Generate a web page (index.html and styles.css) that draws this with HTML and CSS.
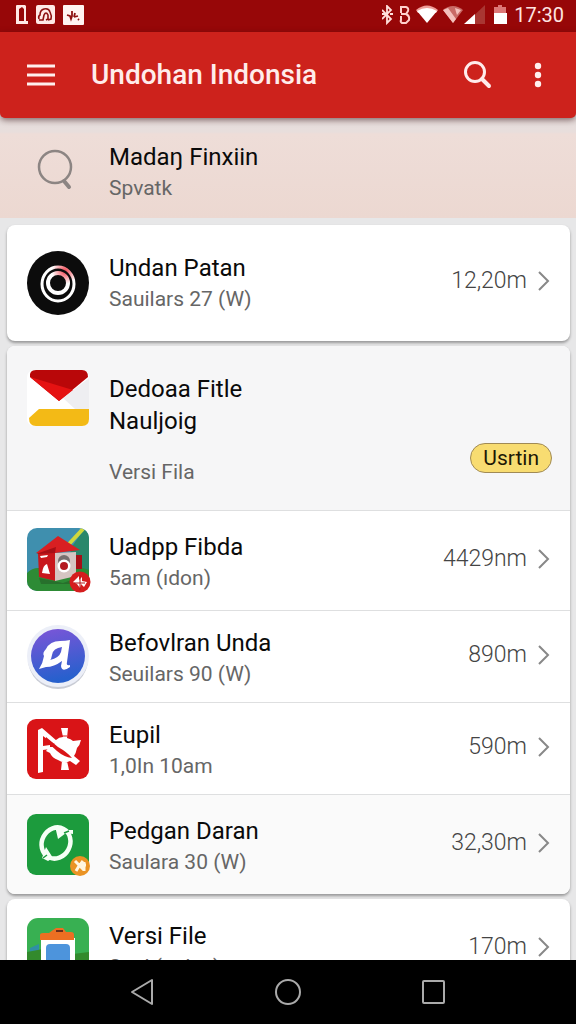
FILE: index.html
```html
<!DOCTYPE html>
<html lang="id">
<head>
<meta charset="utf-8">
<meta name="viewport" content="width=device-width, initial-scale=1">
<title>Undohan Indonsia</title>
<link rel="stylesheet" href="styles.css">
</head>
<body>
<div class="status">
  <div class="status-group">
    <svg width="70" height="20" viewBox="0 0 70 20" aria-hidden="true">
      <path fill="#ffe9e6" fill-rule="evenodd" d="M1 1q0-1 1-1h8l1 1v15h2v3H1zM4 4l3-2 2 2v12H4z"/>
      <rect x="21" width="19" height="19" rx="2" fill="#ffe9e6"/>
      <path fill="none" stroke="#8d1010" stroke-width="1.600" d="M24 14q-1-3 1-4 0-5 4-6 5-1 6 3 2 4 1 7l-3 1M24 15l4 0 1-5q2-4 4 0l0 4-2 1"/>
      <rect x="48" width="21" height="20" rx="1" fill="#fff3f1"/>
      <path fill="none" stroke="#8d1010" stroke-width="1.800" d="M52 10l3 1 1 3 1-3 0-5M59 12l1-4M59 12l4-1M63 14l1 1"/>
    </svg>
  </div>
  <div class="status-group">
    <svg width="126" height="20" viewBox="0 0 126 20" aria-hidden="true">
      <path fill="none" stroke="#ffe0dc" stroke-width="1.800" d="M0 5l9 9-4 4V1l4 4-9 9M0 9h3M8 9h3"/>
      <path fill="none" stroke="#ffd0cc" stroke-width="2" d="M19 8V2h5q3 1 2 4l-2 3h-5l5 0q4 2 3 6l-3 3h-4q-2-1-1-3v-4"/>
      <path fill="#ef9c98" d="M34 5q11-9 22 0l-2 3H36z"/>
      <path fill="#fff" d="M35 6q10-6 20 0L45 18z"/>
      <path fill="#c96a66" d="M61 5q10-8 20 0L71 18z"/>
      <path fill="#f4c0bc" d="M61 5l5-2 8 11-3 4zM73 3l6 2-4 5-1-3z"/>
      <path fill="#a93632" d="M103 0v19H83z"/>
      <path fill="#fff" d="M93 9v10H82z"/>
      <path fill="#d77" d="M112 2h4V0h4v2h4v8h-12z"/>
      <path fill="#fff" d="M112 8h13v11h-13z"/>
    </svg>
    <span class="clock">17:30</span>
  </div>
</div>

<header class="appbar">
  <button class="icon-button" type="button" aria-label="Menu">
    <svg width="28" height="22" viewBox="0 0 28 22"><path stroke="#fff0ee" stroke-width="3" d="M0 2h28M0 11h28M0 20h28"/></svg>
  </button>
  <h1 class="appbar-title">Undohan Indonsia</h1>
  <div class="actions">
    <button class="icon-button" type="button" aria-label="Cari">
      <svg width="28" height="28" viewBox="0 0 28 28" fill="none" stroke="#ffeceb" stroke-width="3"><circle cx="11" cy="11" r="9.500"/><path stroke-width="4" stroke-linecap="round" d="M18 18l7 7"/></svg>
    </button>
    <button class="icon-button" type="button" aria-label="Opsi lain">
      <svg width="8" height="26" viewBox="0 0 8 26" fill="#fff0ee"><circle cx="4" cy="4" r="3.200"/><circle cx="4" cy="13" r="3.200"/><circle cx="4" cy="22" r="3.200"/></svg>
    </button>
  </div>
</header>

<main class="list">
  <a class="row search-row" href="#">
    <span class="icon">
      <svg width="60" height="42" viewBox="0 0 60 42" fill="none" stroke="#8c8583" stroke-width="2.500"><circle cx="28" cy="18" r="16"/><path stroke-width="4" stroke-linecap="round" d="M37 32l5 6"/></svg>
    </span>
    <span class="text"><span class="title">Madaŋ Finxiin</span><span class="sub">Spvatk</span></span>
  </a>

  <section class="card first">
    <a class="row tall" href="#">
      <span class="icon">
        <svg width="62" height="64" viewBox="0 0 62 64">
          <defs><radialGradient id="ring" gradientUnits="userSpaceOnUse" cx="38" cy="20" r="13"><stop offset="0" stop-color="#ee4652"/><stop offset=".5" stop-color="#f9a0a6"/><stop offset="1" stop-color="#fff"/></radialGradient></defs>
          <ellipse cx="31" cy="32" rx="31" ry="32" fill="#0c0c0c"/>
          <ellipse cx="31" cy="33" rx="16" ry="17" fill="none" stroke="url(#ring)" stroke-width="3"/>
          <circle cx="31" cy="32" r="10" fill="none" stroke="url(#ring)" stroke-width="4"/>
        </svg>
      </span>
      <span class="text"><span class="title">Undan Patan</span><span class="sub">Sauilars 27 (W)</span></span>
      <span class="value">12,20m</span>
      <svg class="chevron" viewBox="0 0 12 20"><path d="M1 1l9 9-9 9"/></svg>
    </a>
  </section>

  <section class="card">
    <div class="row featured">
      <span class="icon">
        <svg width="62" height="56" viewBox="0 0 62 56">
          <rect width="62" height="56" rx="7" fill="#fff"/>
          <path fill="#eeeef1" d="M62 8v31H48L36 28z"/>
          <path fill="#b90709" d="M9 0h46q6 0 6 7L32 31 3 7Q2 0 9 0z"/>
          <path fill="#e51212" d="M3 7L32 31 46 20Z"/>
          <path fill="#f3ba16" d="M12 39h50v10q0 7-7 7H9q-7 0-7-8z"/>
        </svg>
      </span>
      <span class="text"><span class="title">Dedoaa Fitle<br>Nauljoig</span><span class="sub">Versi Fila</span></span>
      <button class="pill" type="button">Usrtin</button>
    </div>
    <a class="row tall-item" href="#">
      <span class="icon">
        <svg width="64" height="66" viewBox="0 0 64 66">
          <defs><clipPath id="tile"><rect width="62" height="63" rx="10"/></clipPath></defs>
          <g clip-path="url(#tile)">
            <rect width="62" height="63" fill="#3f8fae"/>
            <path fill="#29876b" d="M62 0v50H40L44 20 58 0z"/>
            <path stroke="#cfd83c" stroke-width="4" d="M42 16L56 1"/>
            <path fill="#2d8b35" d="M0 45q8-8 20-3l30-4 12 4v21H0z"/>
            <path fill="#27702c" d="M12 50l24 5 14-5v6H14z"/>
          </g>
          <path fill="#c9171c" d="M11 25l18-2v30l-17-4z"/>
          <path fill="#d5c5c2" d="M28 25l21-1v24l-21 5z"/>
          <path fill="#d81f22" d="M9 25L31 8l22 14-25 3z"/>
          <path fill="#a60f16" d="M28 25l-19 1 20-7zM49 27h6v14h-6z"/>
          <path fill="#fff" d="M15 45q1-8 5-9l3 10zM13 28l8-1-1 2-6 1z"/>
          <circle cx="37" cy="33" r="6" fill="#77706f"/>
          <circle cx="37" cy="38" r="6.500" fill="#fff"/>
          <circle cx="37" cy="38" r="4" fill="#b41a20"/>
          <circle cx="53" cy="54" r="10.500" fill="#d51d1e"/>
          <path fill="#fff" d="M46 54l6-6 0 4 3-3 0 4 5 1-3 5-3-3-1 4-3-4z"/>
          <path stroke="#b5181b" stroke-width="1" d="M53 47v15M47 55h11"/>
        </svg>
      </span>
      <span class="text"><span class="title">Uadpp Fibda</span><span class="sub">5am (ıdon)</span></span>
      <span class="value">4429nm</span>
      <svg class="chevron" viewBox="0 0 12 20"><path d="M1 1l9 9-9 9"/></svg>
    </a>
    <a class="row" href="#">
      <span class="icon">
        <svg width="62" height="66" viewBox="1 0 62 66">
          <defs><linearGradient id="violet" x1="0" y1="0" x2=".2" y2="1"><stop offset="0" stop-color="#7d55d8"/><stop offset="1" stop-color="#2760cd"/></linearGradient></defs>
          <circle cx="32" cy="35" r="30" fill="#c9ccd5"/>
          <circle cx="32" cy="32" r="31" fill="#eceff8"/>
          <circle cx="32" cy="32" r="27" fill="url(#violet)"/>
          <path fill="#fff" fill-rule="evenodd" d="M13 45q4-6 5-13-2-3 2-7 4-8 14-8 6 0 10-1l-3 22q-1 4 3 3l0 2q-8 6-9-1l1-5q-8 6-16 6zM24 36q9-2 11-8l1-5q-9 1-10 8l-1 4z"/>
        </svg>
      </span>
      <span class="text"><span class="title">Befovlran Unda</span><span class="sub">Seuilars 90 (W)</span></span>
      <span class="value">890m</span>
      <svg class="chevron" viewBox="0 0 12 20"><path d="M1 1l9 9-9 9"/></svg>
    </a>
    <a class="row" href="#">
      <span class="icon">
        <svg width="62" height="60" viewBox="0 0 62 60">
          <rect width="62" height="60" rx="9" fill="#d91417"/>
          <path fill="#fff" d="M34 9h7l-1 10q4 1 6 3l8-1q-1 5-4 8-1 5-3 8l6 5-4 4-6-4q-6 3-12-1-6-2-8-7l-4-2 3-4h4l3-7q3-3 7-3zM35 42h5l2 9h-8z"/>
          <path fill="#fff" d="M11 11l4-2 15 13-3 3-11-8v10l7-1v4l-7 1v22l-5 1z"/>
          <path fill="#d91417" d="M19 18l12 10q9 5 14 11-8-1-15-7-6-5-11-11z"/>
          <path fill="none" stroke="#d91417" stroke-width="1" d="M35 17h5"/>
        </svg>
      </span>
      <span class="text"><span class="title">Eupil</span><span class="sub">1,0In 10am</span></span>
      <span class="value">590m</span>
      <svg class="chevron" viewBox="0 0 12 20"><path d="M1 1l9 9-9 9"/></svg>
    </a>
    <a class="row tall-item shaded" href="#">
      <span class="icon">
        <svg width="64" height="62" viewBox="0 0 64 62">
          <rect width="62" height="61" rx="9" fill="#1c9b3d"/>
          <ellipse cx="29" cy="29" rx="14" ry="16" transform="rotate(28 29 29)" fill="none" stroke="#f5fff6" stroke-width="4.500"/>
          <path fill="#f5fff6" d="M28 12l14 4 4 0 0 4-7-1-8 6zM15 44l4-11 7 11-5 3z"/>
          <path stroke="#1c9b3d" stroke-width="1.500" d="M37 19l5-2M16 44l4-3"/>
          <circle cx="53" cy="52" r="10" fill="#ea9324"/>
          <path stroke="#fff6e0" stroke-width="3" fill="none" d="M48 47l9 9M49 57l3-5M56 47l-3 4M53 51h6M57 48v9"/>
        </svg>
      </span>
      <span class="text"><span class="title">Pedgan Daran</span><span class="sub">Saulara 30 (W)</span></span>
      <span class="value">32,30m</span>
      <svg class="chevron" viewBox="0 0 12 20"><path d="M1 1l9 9-9 9"/></svg>
    </a>
  </section>

  <section class="card">
    <a class="row tall-item" href="#">
      <span class="icon">
        <svg width="62" height="62" viewBox="0 0 62 62">
          <defs><clipPath id="clip-tile"><rect width="62" height="62" rx="11"/></clipPath></defs>
          <g clip-path="url(#clip-tile)">
            <rect width="62" height="62" fill="#38b052"/>
            <path fill="#2f8fa5" d="M3 30l9-4v8l-9 2z"/>
            <path fill="#338a2d" d="M0 34l16-3 30 5 16-2v28H0z"/>
          </g>
          <rect x="14" y="20" width="34" height="38" fill="#fff"/>
          <path fill="#ed6f22" d="M13 22v-5q0-2 3-2h6l4-3 3-2h7l3 4h5q3 0 3 3v5z"/>
          <path fill="#6c2d1a" d="M29 12h7v2h-7z"/>
          <path fill="#4d94dc" d="M19 30q0-4 4-4h16q4 0 4 4v26H19z"/>
        </svg>
      </span>
      <span class="text"><span class="title">Versi File</span><span class="sub">Saul (utıkın)</span></span>
      <span class="value">170m</span>
      <svg class="chevron" viewBox="0 0 12 20"><path d="M1 1l9 9-9 9"/></svg>
    </a>
  </section>
</main>

<nav class="navbar" aria-label="Navigasi sistem">
  <button class="icon-button" type="button" aria-label="Kembali"><svg width="28" height="28" viewBox="0 0 28 28"><path d="M24 2v24L4 14z"/></svg></button>
  <button class="icon-button" type="button" aria-label="Beranda"><svg width="28" height="28" viewBox="0 0 28 28"><circle cx="14" cy="14" r="12"/></svg></button>
  <button class="icon-button" type="button" aria-label="Terkini"><svg width="28" height="28" viewBox="0 0 28 28"><rect x="3" y="3" width="21" height="22" rx="1"/></svg></button>
</nav>
</body>
</html>
```
FILE: styles.css
```css
* {
  box-sizing: border-box;
}

body {
  margin: 0;
  height: 100vh;
  display: flex;
  flex-direction: column;
  background: #e7e7e8;
  font-family: Roboto, "Liberation Sans", sans-serif;
  color: #111;
}

svg {
  display: block;
  flex: none;
}

.status {
  flex: none;
  display: flex;
  justify-content: space-between;
  align-items: center;
  height: 32px;
  padding: 0 12px 2px 15px;
  background: #970708;
}

.status-group {
  display: flex;
  align-items: center;
  gap: 6px;
}

.clock {
  font-size: 20px;
  line-height: 24px;
  color: #ffe4e1;
}

.icon-button {
  display: flex;
  align-items: center;
  justify-content: center;
  padding: 0;
  border: 0;
  background: none;
}

.appbar {
  flex: none;
  position: relative;
  z-index: 1;
  display: flex;
  align-items: center;
  gap: 36px;
  height: 86px;
  padding: 0 34px 0 27px;
  background: #cd221c;
  border-radius: 0 0 5px 5px;
  box-shadow: 0 2px 6px rgba(60, 20, 20, 0.6);
}

.appbar-title {
  flex: 1;
  margin: 0;
  font-size: 28px;
  font-weight: 500;
  line-height: 32px;
  color: #ffeceb;
}

.actions {
  display: flex;
  align-items: center;
  gap: 42px;
}

.list {
  flex: 1;
  min-height: 0;
  overflow: hidden;
}

.row {
  display: flex;
  align-items: center;
  min-height: 92px;
  padding: 0 20px;
  color: inherit;
  text-decoration: none;
}

.row + .row {
  border-top: 1px solid #dedfe0;
}

.search-row {
  min-height: 100px;
  padding: 4px 20px 0 27px;
  background: linear-gradient(#e6dedd 0, #e8dedc 14px, #eeddd8 16px, #ecd8d1 100%);
}

.tall {
  min-height: 116px;
}

.tall-item {
  min-height: 100px;
}

.shaded {
  background: #fafafa;
}

.card {
  margin: 5px 6px 0 7px;
  overflow: hidden;
  background: #fff;
  border-radius: 8px;
  box-shadow: 0 2px 3px rgba(0, 0, 0, 0.35);
}

.first {
  margin-top: 7px;
}

.icon {
  flex: none;
  display: flex;
  width: 62px;
  margin-right: 20px;
}

.text {
  flex: 1;
  display: flex;
  flex-direction: column;
  padding-top: 3px;
}

.tall .text {
  padding-top: 0;
}

.title {
  font-size: 24px;
  line-height: 32px;
  color: #0a0a0a;
}

.sub {
  font-size: 21px;
  line-height: 30px;
  color: #666;
}

.value {
  padding-bottom: 4px;
  font-size: 23px;
  line-height: 28px;
  font-weight: 300;
  color: #444;
}

.chevron {
  width: 12px;
  height: 20px;
  margin: 0 0 4px 11px;
  fill: none;
  stroke: #888;
  stroke-width: 2;
}

.featured {
  align-items: flex-start;
  padding: 24px 18px 23px 20px;
  background: #f6f6f7;
}

.featured .text {
  gap: 20px;
}

.pill {
  align-self: flex-end;
  height: 30px;
  margin-bottom: 14px;
  padding: 0 12px;
  border: 1px solid #a08a55;
  border-radius: 15px;
  background: #f8dc71;
  font-family: inherit;
  font-size: 21px;
  line-height: 28px;
  color: #1c1805;
}

.navbar {
  flex: none;
  display: flex;
  justify-content: center;
  align-items: center;
  gap: 118px;
  height: 64px;
  background: #000;
}

.navbar svg {
  fill: none;
  stroke: #aaa;
  stroke-width: 2;
  stroke-linejoin: round;
}
```
